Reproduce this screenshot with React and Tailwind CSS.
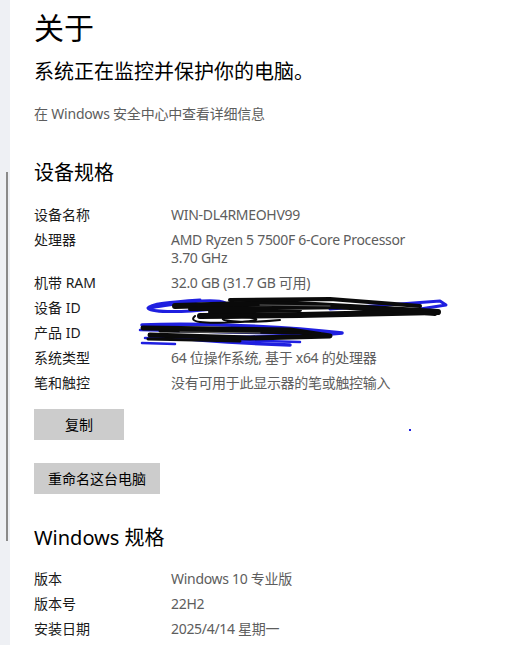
import React from 'react'

const font = { fontFamily: '"Noto Sans", "Noto Sans CJK SC", sans-serif' }

const deviceRows = [
  ['设备名称', 'WIN-DL4RMEOHV99'],
  ['处理器', 'AMD Ryzen 5 7500F 6-Core Processor\n3.70 GHz'],
  ['机带 RAM', '32.0 GB (31.7 GB 可用)'],
  ['设备 ID', ''],
  ['产品 ID', ''],
  ['系统类型', '64 位操作系统, 基于 x64 的处理器'],
  ['笔和触控', '没有可用于此显示器的笔或触控输入'],
]

const winRows = [
  ['版本', 'Windows 10 专业版'],
  ['版本号', '22H2'],
  ['安装日期', '2025/4/14 星期一'],
]

function Rows({ rows }) {
  return (
    <div className="grid grid-cols-[137px_1fr] gap-y-[7px] text-[14px] leading-[18px]">
      {rows.map(([k, v]) => (
        <React.Fragment key={k}>
          <div className="text-[#1a1a1a]">{k}</div>
          <div className="text-[#5d5d5d] whitespace-pre-line tracking-[-0.3px]">{v}</div>
        </React.Fragment>
      ))}
    </div>
  )
}

function Scribble() {
  return (
    <svg className="absolute left-0 top-0 pointer-events-none" width="519" height="645" viewBox="0 0 519 645" fill="none" strokeLinecap="round" strokeLinejoin="round">
      {/* blue under-strokes */}
      <path d="M200 300 C170 302 150 304 148 308 C150 312 175 313 215 309 C235 306 230 298 190 302 C175 304 160 306 150 308" stroke="#1f1fe0" strokeWidth="3" />
      <path d="M330 309 L400 304 L440 301 L446 305 L420 309 L350 313" stroke="#1f1fe0" strokeWidth="3" />
      <path d="M142 325 C200 323 280 326 342 333 C300 337 220 339 150 335 C200 341 260 344 290 345" stroke="#1f1fe0" strokeWidth="3.5" />
      <path d="M140 330 L330 335 M145 338 L300 342 M142 343 L175 344" stroke="#1f1fe0" strokeWidth="2.5" />
      {/* black over-strokes */}
      <path d="M175 306 L280 303 L438 312 L300 315 L200 316" stroke="#0a0a0a" strokeWidth="6" />
      <path d="M230 300 L330 299 L420 306 M190 309 L360 307 L435 314 M210 312 L300 310" stroke="#0a0a0a" strokeWidth="4" />
      <path d="M195 316 C188 322 200 324 240 322 C270 320 255 316 225 318 C215 320 240 324 280 320" stroke="#0a0a0a" strokeWidth="2" />
      <path d="M143 328 L290 330 L330 336 L250 338 L150 335" stroke="#0a0a0a" strokeWidth="5" />
      <path d="M160 331 L310 333 M148 339 L240 341" stroke="#0a0a0a" strokeWidth="3" />
      <path d="M260 305 L330 306 M180 332 L260 333" stroke="#777777" strokeWidth="0.8" />
      <rect x="409" y="429" width="2" height="2" fill="#1f1fe0" />
    </svg>
  )
}

export default function App() {
  return (
    <div className="relative flex w-[519px] h-[645px] overflow-hidden bg-white" style={font}>
      <div className="w-[10px] shrink-0 bg-[#eef0f4] relative">
        <div className="absolute left-[6px] top-[172px] w-[2px] h-[369px] bg-[#8a8a8a]" />
      </div>
      <div className="flex-1 pl-[24px] pt-[8px]">
        <h1 className="text-[30px] leading-[40px] text-black">关于</h1>
        <p className="mt-[10px] text-[20px] leading-[28px] text-black">系统正在监控并保护你的电脑。</p>
        <p className="mt-[18px] text-[14px] leading-[20px] text-[#5d5d5d] tracking-[-0.2px]">在 Windows 安全中心中查看详细信息</p>

        <h2 className="mt-[35px] text-[20px] leading-[28px] text-black">设备规格</h2>
        <div className="mt-[19px]">
          <Rows rows={deviceRows} />
        </div>
        <button className="mt-[17px] block w-[90px] h-[31px] bg-[#cccccc] text-[14px] text-black">复制</button>
        <button className="mt-[23px] block w-[126px] h-[31px] bg-[#cccccc] text-[14px] text-black">重命名这台电脑</button>

        <h2 className="mt-[30px] text-[20px] leading-[28px] text-black">Windows 规格</h2>
        <div className="mt-[18px]">
          <Rows rows={winRows} />
        </div>
      </div>
      <Scribble />
    </div>
  )
}
